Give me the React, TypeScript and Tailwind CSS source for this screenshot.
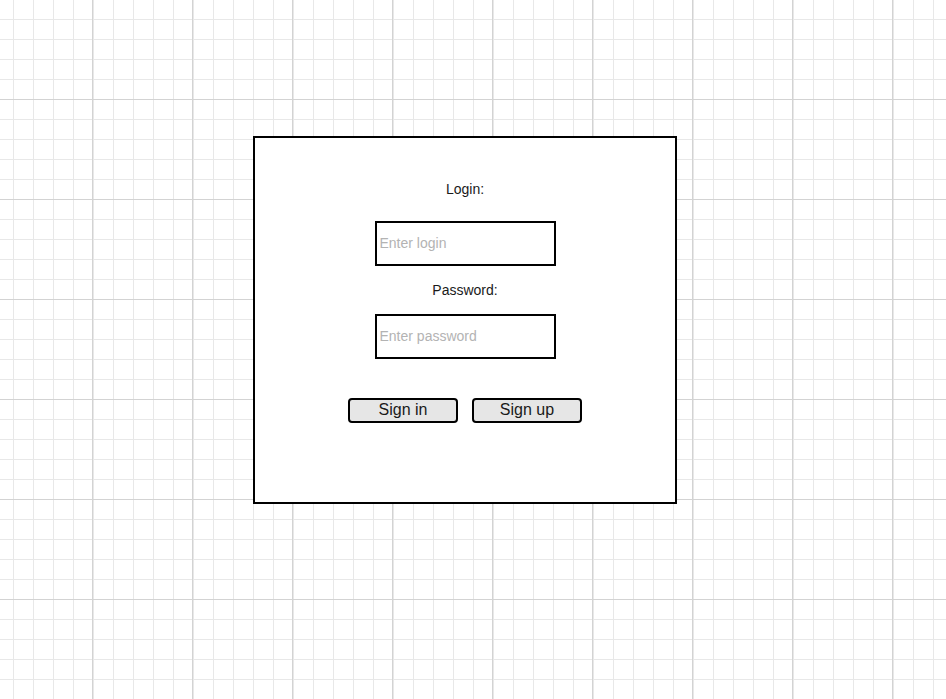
import React from "react";

export default function App() {
  return (
    <div
      className="w-full h-[699px] overflow-hidden bg-white bg-[repeating-linear-gradient(to_right,transparent_0px,transparent_92px,#d3d3d3_92px,#d3d3d3_93px,transparent_93px,transparent_100px),repeating-linear-gradient(to_bottom,transparent_0px,transparent_99px,#d3d3d3_99px,#d3d3d3_100px),repeating-linear-gradient(to_right,transparent_0px,transparent_13px,#e8e8e8_13px,#e8e8e8_14px,transparent_14px,transparent_20px),repeating-linear-gradient(to_bottom,transparent_0px,transparent_19px,#e8e8e8_19px,#e8e8e8_20px)] pt-[136px] pl-[253px]"
      style={{ fontFamily: '"Liberation Sans", Arial, sans-serif' }}
    >
      <div className="w-[424px] h-[368px] border-2 border-black bg-white flex flex-col items-center">
        <div className="mt-[43px] h-[16px] leading-[16px] text-[14px] text-[#1a1a1a]">Login:</div>
        <input
          className="mt-[24px] w-[181px] h-[45px] border-2 border-black bg-white pl-[3px] pb-[2px] text-[14px] outline-none placeholder:text-[#b3b3b3]"
          placeholder="Enter login"
        />
        <div className="mt-[16px] h-[16px] leading-[16px] text-[14px] text-[#1a1a1a]">Password:</div>
        <input
          className="mt-[16px] w-[181px] h-[45px] border-2 border-black bg-white pl-[3px] pb-[2px] text-[14px] outline-none placeholder:text-[#b3b3b3]"
          placeholder="Enter password"
        />
        <div className="mt-[39px] flex gap-[14px]">
          <button className="w-[110px] h-[25px] border-2 border-black rounded-[4px] bg-[#e6e6e6] text-[16px] leading-[19px] pb-[2px] text-[#1a1a1a]">
            Sign in
          </button>
          <button className="w-[110px] h-[25px] border-2 border-black rounded-[4px] bg-[#e6e6e6] text-[16px] leading-[19px] pb-[2px] text-[#1a1a1a]">
            Sign up
          </button>
        </div>
      </div>
    </div>
  );
}
